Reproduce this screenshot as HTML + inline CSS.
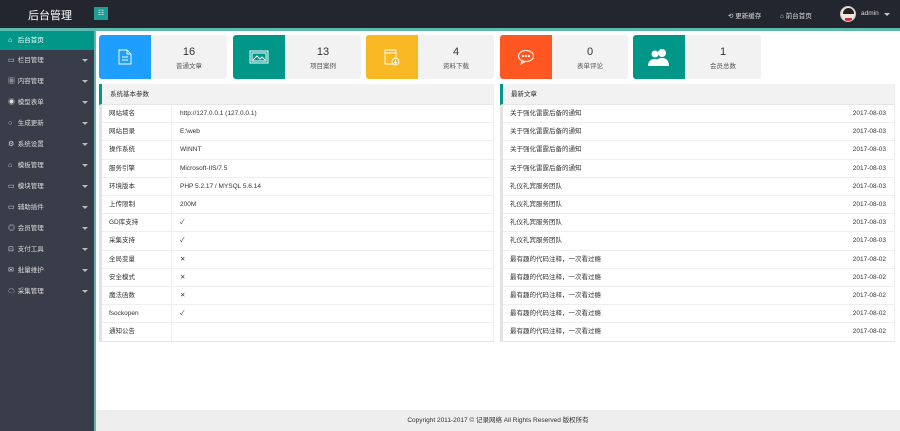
<!DOCTYPE html>
<html><head><meta charset="utf-8">
<style>
*{margin:0;padding:0;box-sizing:border-box}
body{width:900px;height:431px;overflow:hidden;background:#fff;font-family:"Liberation Sans","Noto Sans CJK SC",sans-serif;font-size:7px;color:#333;position:relative}
.top{position:absolute;left:0;top:0;width:900px;height:28px;background:#23262e}
.tline{position:absolute;left:0;top:28px;width:900px;height:3px;background:#5fb8ad}
.logo{position:absolute;left:28px;top:7px;color:#fff;font-size:11px}
.fold{position:absolute;left:94px;top:7px;width:14px;height:13px;background:#1aa094;color:#fff;font-size:7px;text-align:center;line-height:13px}
.tr{position:absolute;top:10px;color:#ddd;font-size:6.5px}
.side{position:absolute;left:0;top:31px;width:94px;height:400px;background:#393d49}
.vline{position:absolute;left:94px;top:31px;width:2px;height:400px;background:#5fb8ad}
.item{height:21px;line-height:21px;color:#ddd;font-size:6.5px;padding-left:8px;position:relative}
.item.act{background:#009688;color:#fff;height:19px;line-height:19px}
.item .ic{display:inline-block;width:8px;font-size:7px}
.item .ar{position:absolute;right:6px;top:9px;border:3px solid transparent;border-top:3px solid #bbb;border-bottom:0}
.card{position:absolute;top:35px;width:128px;height:44px;background:#f2f2f2;border-radius:3px;overflow:hidden}
.card .ib{position:absolute;left:0;top:0;width:52px;height:44px;display:flex;align-items:center;justify-content:center}
.card .n{position:absolute;left:52px;right:0;top:11px;text-align:center;font-size:11px;color:#333}
.card .t{position:absolute;left:52px;right:0;top:25px;text-align:center;font-size:6.5px;color:#555}
.panel{position:absolute;top:84px;width:395px;height:258px;border-left:3px solid #e2e2e2;border-right:1px solid #eee;border-bottom:1px solid #e6e6e6}
.ph{height:21px;line-height:21px;background:#f2f2f2;border-left:3px solid #009688;margin-left:-3px;padding-left:8px;font-size:6.5px;border-bottom:1px solid #e6e6e6}
.row{height:18.2px;line-height:18px;border-bottom:1px solid #eee;font-size:6.5px;display:flex}
.row .l{width:70px;padding-left:7px;border-right:1px solid #eee}
.row .v{padding-left:8px;flex:1}
.row .a{flex:1;padding-left:7px}
.row .d{padding-right:8px}
.foot{position:absolute;left:96px;top:410px;width:804px;height:21px;background:#eee;text-align:center;line-height:21px;font-size:6.5px;color:#333}
</style></head><body>
<div class="top"></div><div class="tline"></div>
<div class="logo">后台管理</div>
<div class="fold">☷</div>
<div class="tr" style="left:728px">⟲ 更新缓存</div>
<div class="tr" style="left:780px">⌂ 前台首页</div>
<div style="position:absolute;left:840px;top:6px;width:16px;height:16px;border-radius:50%;background:#f4e4dc;border:1px solid #ccc;overflow:hidden"><div style="position:absolute;left:2px;top:1px;width:11px;height:6px;background:#222;border-radius:6px 6px 0 0"></div><div style="position:absolute;left:4px;top:11px;width:7px;height:5px;background:#c33"></div></div>
<div class="tr" style="left:861px">admin</div>
<div style="position:absolute;left:884px;top:13px;border:3px solid transparent;border-top:3px solid #ccc;border-bottom:0"></div>

<div class="side">
<div class="item act"><span class="ic">⌂</span> 后台首页</div>
<div class="item"><span class="ic">▭</span> 栏目管理<i class="ar"></i></div>
<div class="item"><span class="ic">▦</span> 内容管理<i class="ar"></i></div>
<div class="item"><span class="ic">◉</span> 模型表单<i class="ar"></i></div>
<div class="item"><span class="ic">○</span> 生成更新<i class="ar"></i></div>
<div class="item"><span class="ic">⚙</span> 系统设置<i class="ar"></i></div>
<div class="item"><span class="ic">⌂</span> 模板管理<i class="ar"></i></div>
<div class="item"><span class="ic">▭</span> 模块管理<i class="ar"></i></div>
<div class="item"><span class="ic">▭</span> 辅助插件<i class="ar"></i></div>
<div class="item"><span class="ic">◎</span> 会员管理<i class="ar"></i></div>
<div class="item"><span class="ic">⊡</span> 支付工具<i class="ar"></i></div>
<div class="item"><span class="ic">✉</span> 批量维护<i class="ar"></i></div>
<div class="item"><span class="ic">☁</span> 采集管理<i class="ar"></i></div>
</div>
<div class="vline"></div>

<div class="card" style="left:99px"><div class="ib" style="background:#1e9fff"><svg width="14" height="16" viewBox="0 0 14 16" fill="none" stroke="#fff" stroke-width="0.9"><path d="M1 1h8l4 4v10H1z M9 1v4h4 M4 8h6 M4 11h6"/></svg></div><div class="n">16</div><div class="t">普通文章</div></div>
<div class="card" style="left:233px"><div class="ib" style="background:#009688"><svg width="20" height="14" viewBox="0 0 20 14" fill="none" stroke="#fff" stroke-width="1"><rect x="1" y="1" width="18" height="12"/><rect x="3" y="3" width="14" height="8"/><path d="M4 10l4-4 3 3 2-2 3 3"/></svg></div><div class="n">13</div><div class="t">项目案例</div></div>
<div class="card" style="left:366px"><div class="ib" style="background:#f7b824"><svg width="16" height="17" viewBox="0 0 16 17" fill="none" stroke="#fff" stroke-width="0.9"><path d="M9 15H1V1h11v7 M1 4h11"/><circle cx="11.5" cy="12.5" r="3.5"/><path d="M11.5 10.5v4 M10 13l1.5 1.5L13 13"/></svg></div><div class="n">4</div><div class="t">资料下载</div></div>
<div class="card" style="left:500px"><div class="ib" style="background:#ff5722"><svg width="18" height="16" viewBox="0 0 18 16" fill="none" stroke="#fff" stroke-width="1.1"><ellipse cx="9" cy="7" rx="7.5" ry="5.5"/><path d="M5 12l-1 3 4-2.5"/><circle cx="6" cy="7" r=".6" fill="#fff"/><circle cx="9" cy="7" r=".6" fill="#fff"/><circle cx="12" cy="7" r=".6" fill="#fff"/></svg></div><div class="n">0</div><div class="t">表单评论</div></div>
<div class="card" style="left:633px"><div class="ib" style="background:#009688"><svg width="24" height="18" viewBox="0 0 24 18" fill="#fff"><circle cx="15" cy="5" r="4"/><path d="M8 18c0-6 3-8 7-8s7 2 7 8z"/><circle cx="8" cy="6" r="3.5"/><path d="M1 18c0-5 3-7 7-7s5 2 5 7z"/></svg></div><div class="n">1</div><div class="t">会员总数</div></div>

<div class="panel" style="left:99px">
<div class="ph">系统基本参数</div>
<div class="row"><div class="l">网站域名</div><div class="v">http://127.0.0.1 (127.0.0.1)</div></div>
<div class="row"><div class="l">网站目录</div><div class="v">E:\web</div></div>
<div class="row"><div class="l">操作系统</div><div class="v">WINNT</div></div>
<div class="row"><div class="l">服务引擎</div><div class="v">Microsoft-IIS/7.5</div></div>
<div class="row"><div class="l">环境版本</div><div class="v">PHP 5.2.17 / MYSQL 5.6.14</div></div>
<div class="row"><div class="l">上传限制</div><div class="v">200M</div></div>
<div class="row"><div class="l">GD库支持</div><div class="v">✓</div></div>
<div class="row"><div class="l">采集支持</div><div class="v">✓</div></div>
<div class="row"><div class="l">全局变量</div><div class="v">✕</div></div>
<div class="row"><div class="l">安全模式</div><div class="v">✕</div></div>
<div class="row"><div class="l">魔法函数</div><div class="v">✕</div></div>
<div class="row"><div class="l">fsockopen</div><div class="v">✓</div></div>
<div class="row" style="border-bottom:0"><div class="l">通知公告</div><div class="v"></div></div>
</div>

<div class="panel" style="left:500px">
<div class="ph">最新文章</div>
<div class="row"><div class="a">关于强化雷霆后备的通知</div><div class="d">2017-08-03</div></div>
<div class="row"><div class="a">关于强化雷霆后备的通知</div><div class="d">2017-08-03</div></div>
<div class="row"><div class="a">关于强化雷霆后备的通知</div><div class="d">2017-08-03</div></div>
<div class="row"><div class="a">关于强化雷霆后备的通知</div><div class="d">2017-08-03</div></div>
<div class="row"><div class="a">礼仪礼宾服务团队</div><div class="d">2017-08-03</div></div>
<div class="row"><div class="a">礼仪礼宾服务团队</div><div class="d">2017-08-03</div></div>
<div class="row"><div class="a">礼仪礼宾服务团队</div><div class="d">2017-08-03</div></div>
<div class="row"><div class="a">礼仪礼宾服务团队</div><div class="d">2017-08-03</div></div>
<div class="row"><div class="a">最有趣的代码注释，一次看过瘾</div><div class="d">2017-08-02</div></div>
<div class="row"><div class="a">最有趣的代码注释，一次看过瘾</div><div class="d">2017-08-02</div></div>
<div class="row"><div class="a">最有趣的代码注释，一次看过瘾</div><div class="d">2017-08-02</div></div>
<div class="row"><div class="a">最有趣的代码注释，一次看过瘾</div><div class="d">2017-08-02</div></div>
<div class="row" style="border-bottom:0"><div class="a">最有趣的代码注释，一次看过瘾</div><div class="d">2017-08-02</div></div>
</div>

<div class="foot">Copyright 2011-2017 © 记录网络 All Rights Reserved 版权所有</div>
</body></html>
